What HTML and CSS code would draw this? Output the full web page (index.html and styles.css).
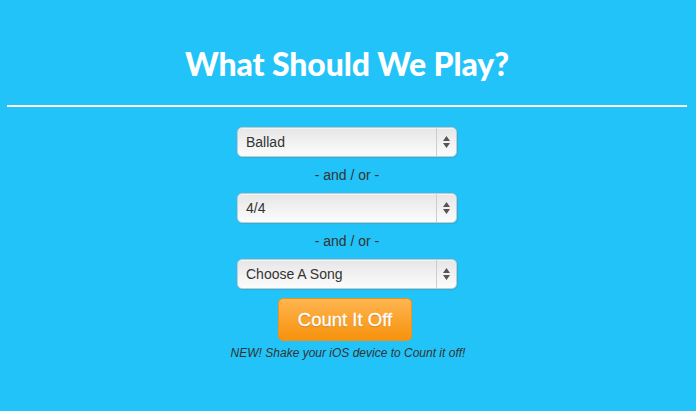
FILE: index.html
```html
<!DOCTYPE html>
<html>
<head>
<meta charset="utf-8">
<link rel="stylesheet" href="styles.css">
</head>
<body>
<header class="header">
  <h1 class="title">What Should We Play?</h1>
</header>
<hr class="rule">
<main class="form">
  <div class="select">
    <span class="select-label">Ballad</span>
    <span class="select-arrows"><svg width="7" height="12" viewBox="0 0 7 12"><path d="M3.5 0 L7 5 L0 5 Z M0 7 L7 7 L3.5 12 Z" fill="#555"/></svg></span>
  </div>
  <div class="sep">- and / or -</div>
  <div class="select">
    <span class="select-label">4/4</span>
    <span class="select-arrows"><svg width="7" height="12" viewBox="0 0 7 12"><path d="M3.5 0 L7 5 L0 5 Z M0 7 L7 7 L3.5 12 Z" fill="#555"/></svg></span>
  </div>
  <div class="sep">- and / or -</div>
  <div class="select">
    <span class="select-label">Choose A Song</span>
    <span class="select-arrows"><svg width="7" height="12" viewBox="0 0 7 12"><path d="M3.5 0 L7 5 L0 5 Z M0 7 L7 7 L3.5 12 Z" fill="#555"/></svg></span>
  </div>
  <button class="btn">Count It Off</button>
  <p class="note">NEW! Shake your iOS device to Count it off!</p>
</main>
</body>
</html>
```
FILE: styles.css
```css
html, body {
  margin: 0;
  padding: 0;
  background: #22c3f8;
  height: 100%;
}
body {
  font-family: "Liberation Sans", Arial, sans-serif;
  color: #333;
  padding-right: 2px;
}
.header {
  padding-top: 44px;
  display: flex;
  justify-content: center;
}
.title {
  margin: 0;
  font-family: Lato, sans-serif;
  font-weight: 900;
  font-size: 32px;
  line-height: 40px;
  color: #fff;
  letter-spacing: -0.1px;
}
.rule {
  margin: 21px 7px 0 7px;
  border: 0;
  height: 2px;
  background: #fff;
}
.form {
  display: flex;
  flex-direction: column;
  align-items: center;
  padding-top: 20px;
}
.select {
  box-sizing: border-box;
  width: 220px;
  height: 30px;
  border-radius: 5px;
  background: linear-gradient(#e6e6e6, #fcfcfc);
  border: 1px solid #c9c9c9;
  box-shadow: inset 0 1px 0 #f4f4f4, 1px 1px 1px rgba(0, 0, 0, 0.08);
  display: flex;
  align-items: center;
}
.select-label {
  flex: 1;
  padding-left: 8px;
  font-size: 14px;
  color: #333;
}
.select-arrows {
  width: 19px;
  height: 100%;
  border-left: 1px solid #cdcdcd;
  display: flex;
  align-items: center;
  justify-content: center;
}
.sep {
  font-size: 14px;
  line-height: 16px;
  margin: 10px 0;
  color: #333;
}
.btn {
  margin-top: 9px;
  margin-right: 4px;
  width: 134px;
  height: 43px;
  border: 1px solid #ee9120;
  border-radius: 5px;
  background: linear-gradient(#ffb550, #f7920c);
  color: #fff;
  font-family: "Liberation Sans", Arial, sans-serif;
  font-size: 18.5px;
  text-shadow: 0 1px 1px rgba(150, 75, 0, 0.45);
  -webkit-text-stroke: 0.3px #fff;
}
.note {
  margin: 5px 0 0 2px;
  font-size: 12px;
  font-style: italic;
  color: #333;
}
```
